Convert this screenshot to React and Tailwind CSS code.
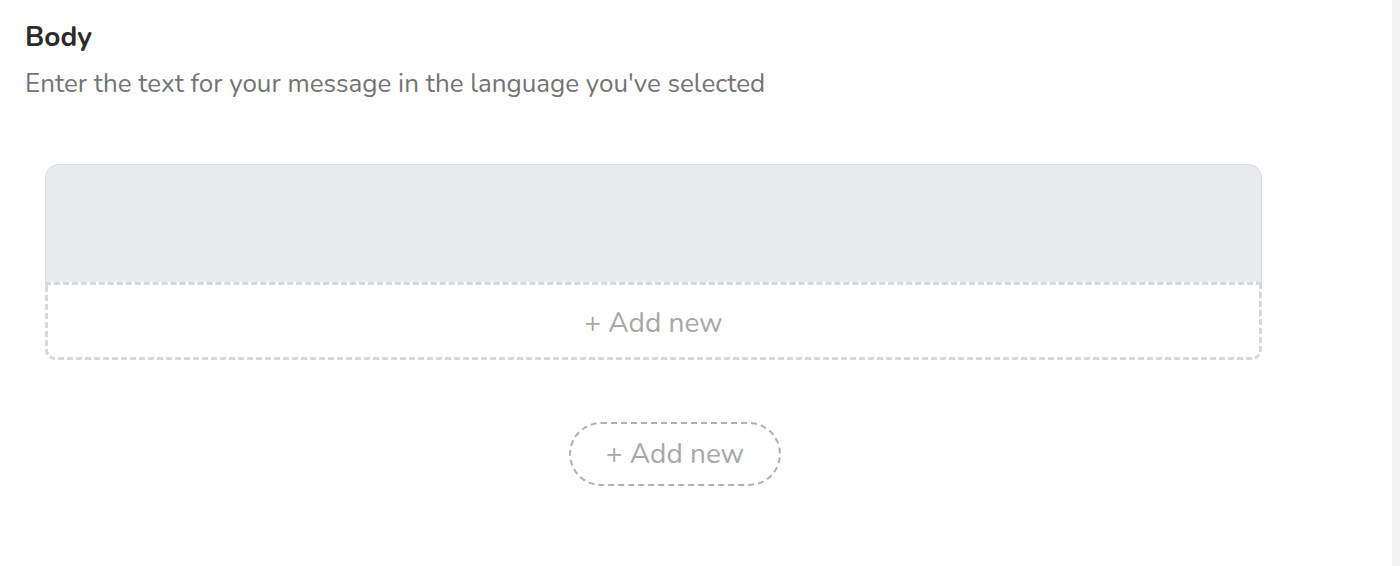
export default function App() {
  return (
    <div
      className="flex min-h-[566px] w-[1400px] bg-white"
      style={{ fontFamily: "Nunito, Lato, 'Noto Sans', sans-serif" }}
    >
      <div className="flex-1 pl-[25px] pr-[20px] pt-[20px]">
        <h2 className="text-[28px] font-bold leading-[34px] text-[#2b2b2b]">Body</h2>
        <p className="mt-[13px] text-[26px] leading-[34px] text-[#747474]">
          Enter the text for your message in the language you've selected
        </p>

        <div className="ml-[20px] mt-[63px] w-[1217px]">
          <div className="h-[118px] rounded-t-[14px] border border-b-0 border-[#dcdde1] bg-[#e9eaee]" />
          <button className="flex h-[78px] w-full items-center justify-center rounded-b-[10px] border-[3px] border-dashed border-[#d8d8d8] bg-white pt-[3px] text-[28px] text-[#a8a8a8]">
            + Add new
          </button>
        </div>

        <div className="ml-[544px] mt-[62px]">
          <button className="flex h-[64px] w-[212px] items-center justify-center rounded-full border-2 border-dashed border-[#b0b0b0] text-[28px] text-[#a8a8a8]">
            + Add new
          </button>
        </div>
      </div>
      <div className="w-[8px] bg-[#f3f3f3]" />
    </div>
  );
}
